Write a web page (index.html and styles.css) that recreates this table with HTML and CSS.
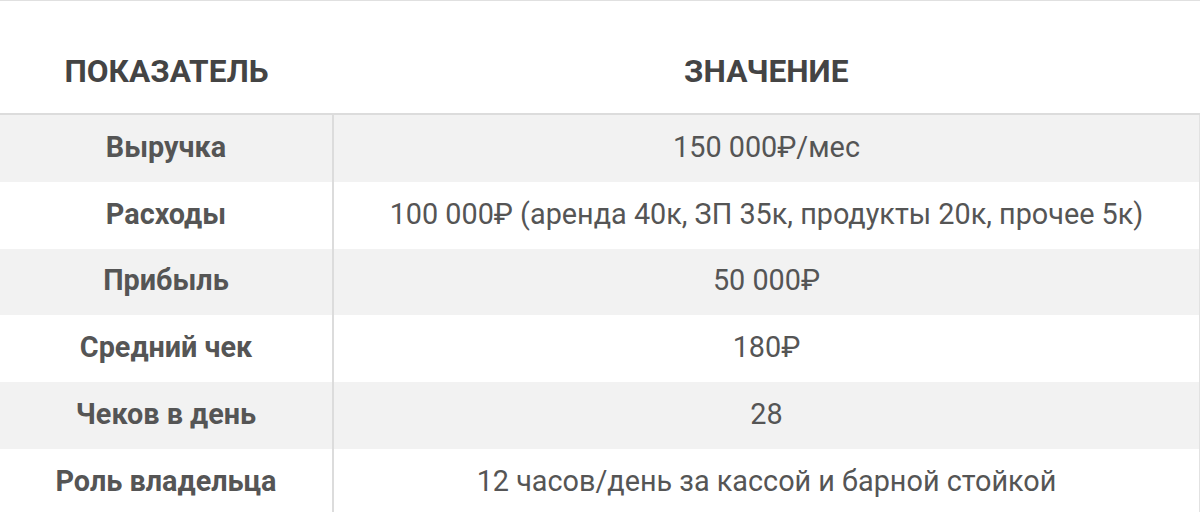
FILE: index.html
```html
<!DOCTYPE html>
<html lang="ru">
<head>
<meta charset="utf-8">
<link rel="stylesheet" href="styles.css">
</head>
<body>
<table class="data">
  <thead>
    <tr><th class="c1">ПОКАЗАТЕЛЬ</th><th class="c2">ЗНАЧЕНИЕ</th></tr>
  </thead>
  <tbody>
    <tr><td class="label">Выручка</td><td class="val">150 000₽/мес</td></tr>
    <tr><td class="label">Расходы</td><td class="val">100 000₽ (аренда 40к, ЗП 35к, продукты 20к, прочее 5к)</td></tr>
    <tr><td class="label">Прибыль</td><td class="val">50 000₽</td></tr>
    <tr><td class="label">Средний чек</td><td class="val">180₽</td></tr>
    <tr><td class="label">Чеков в день</td><td class="val">28</td></tr>
    <tr><td class="label">Роль владельца</td><td class="val">12 часов/день за кассой и барной стойкой</td></tr>
  </tbody>
</table>
</body>
</html>
```
FILE: styles.css
```css
html, body {
  margin: 0;
  padding: 0;
  background: #fff;
}
body {
  font-family: Roboto, "Noto Sans", sans-serif;
  color: #555;
}
.data {
  width: 1200px;
  border-collapse: collapse;
  border-top: 1px solid #e0e0e0;
}
.data th {
  height: 83px;
  padding: 29px 0 0;
  font-size: 31.6px;
  font-weight: 700;
  color: #444;
  text-align: center;
  vertical-align: middle;
  border-bottom: 2px solid #dcdcdc;
}
.data .c1 { width: 333px; }
.data td {
  height: 63.8px;
  padding: 0 0 3px;
  font-size: 28.8px;
  text-align: center;
  border-right: 1px solid #e2e2e2;
}
.data td.label {
  font-weight: 700;
  color: #555;
  border-right: 2px solid #dcdcdc;
}
.data td.val {
  font-weight: 400;
  color: #555;
}
.data tbody tr:nth-child(odd) { background: #f2f2f2; }
```
